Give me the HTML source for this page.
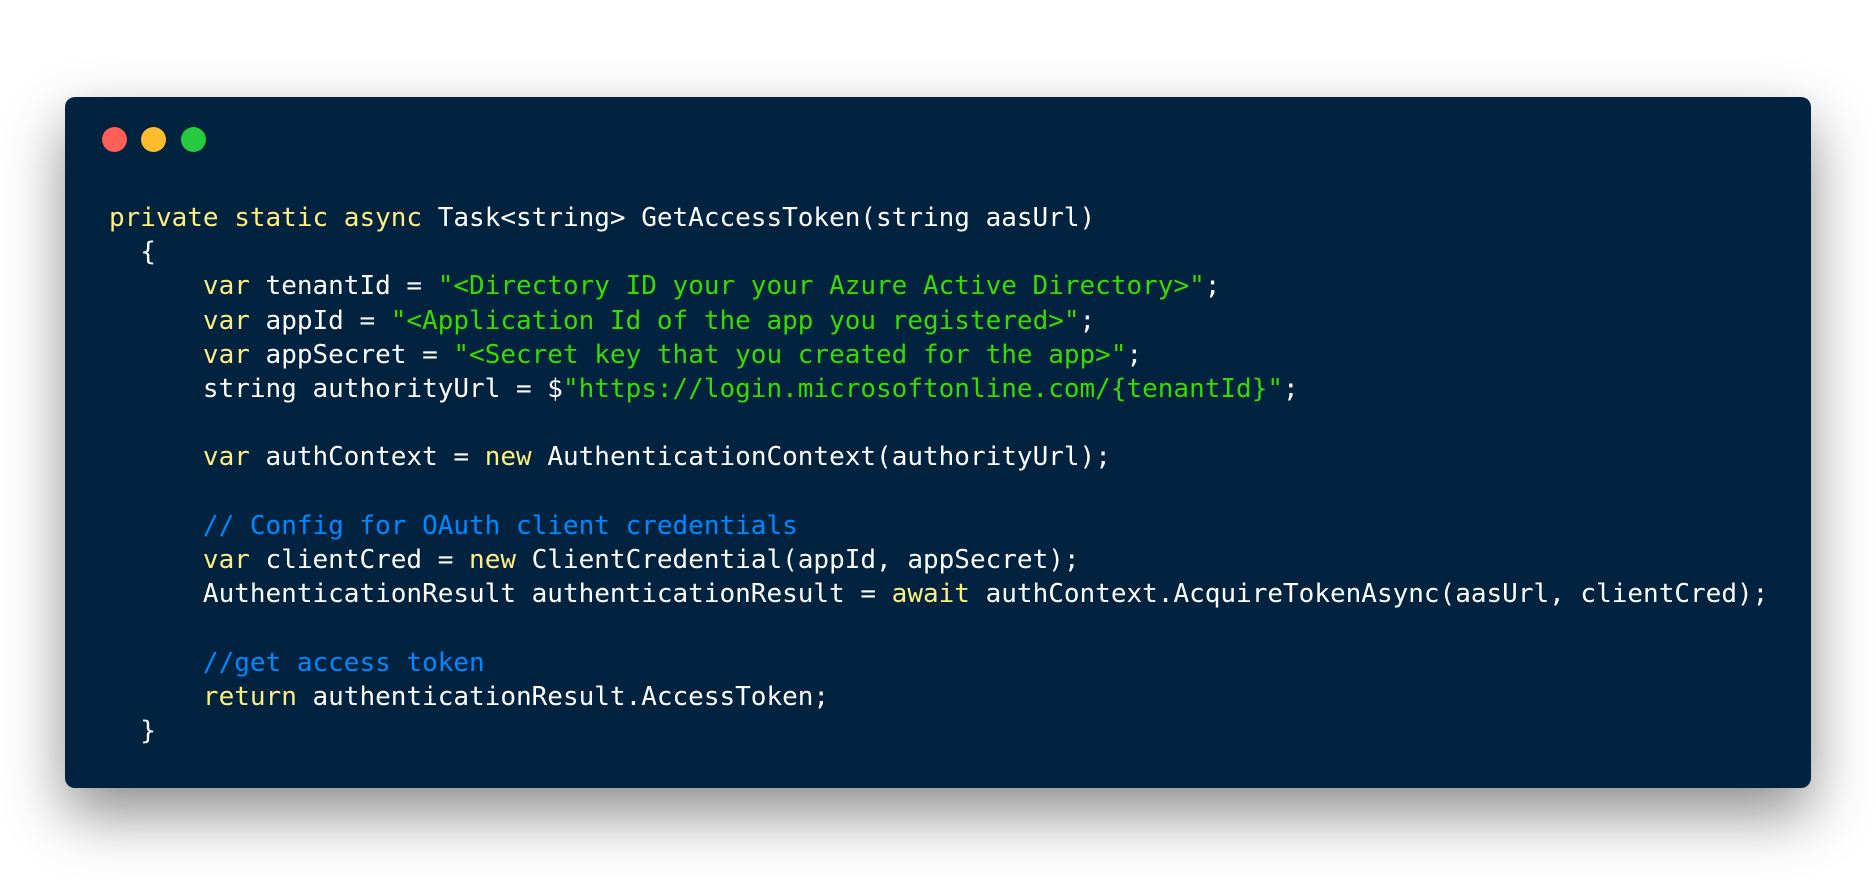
<!DOCTYPE html>
<html><head><style>
html,body{margin:0;padding:0;background:#fff;width:1876px;height:886px;overflow:hidden}
.win{position:absolute;left:65px;top:97px;width:1746px;height:691px;background:#012340;border-radius:10px;box-shadow:0 26px 60px rgba(0,0,0,0.45)}
.dot{position:absolute;top:127px;width:25px;height:25px;border-radius:50%}
pre{position:absolute;left:109px;top:201px;margin:0;font-family:"DejaVu Sans Mono","Liberation Mono",monospace;font-size:26px;line-height:34.2px;color:#fff}
.k{color:#ffee80}.s{color:#3ad900}.c{color:#0088ff}
</style></head><body>
<div class="win"></div>
<div class="dot" style="left:102px;background:#ff5f56"></div>
<div class="dot" style="left:141px;background:#ffbd2e"></div>
<div class="dot" style="left:181px;background:#27c93f"></div>
<pre><span class="k">private static async</span> Task&lt;string&gt; GetAccessToken(string aasUrl)
  {
      <span class="k">var</span> tenantId = <span class="s">"&lt;Directory ID your your Azure Active Directory&gt;"</span>;
      <span class="k">var</span> appId = <span class="s">"&lt;Application Id of the app you registered&gt;"</span>;
      <span class="k">var</span> appSecret = <span class="s">"&lt;Secret key that you created for the app&gt;"</span>;
      string authorityUrl = $<span class="s">"https://login.microsoftonline.com/{tenantId}"</span>;

      <span class="k">var</span> authContext = <span class="k">new</span> AuthenticationContext(authorityUrl);

      <span class="c">// Config for OAuth client credentials</span>
      <span class="k">var</span> clientCred = <span class="k">new</span> ClientCredential(appId, appSecret);
      AuthenticationResult authenticationResult = <span class="k">await</span> authContext.AcquireTokenAsync(aasUrl, clientCred);

      <span class="c">//get access token</span>
      <span class="k">return</span> authenticationResult.AccessToken;
  }</pre>
</body></html>
